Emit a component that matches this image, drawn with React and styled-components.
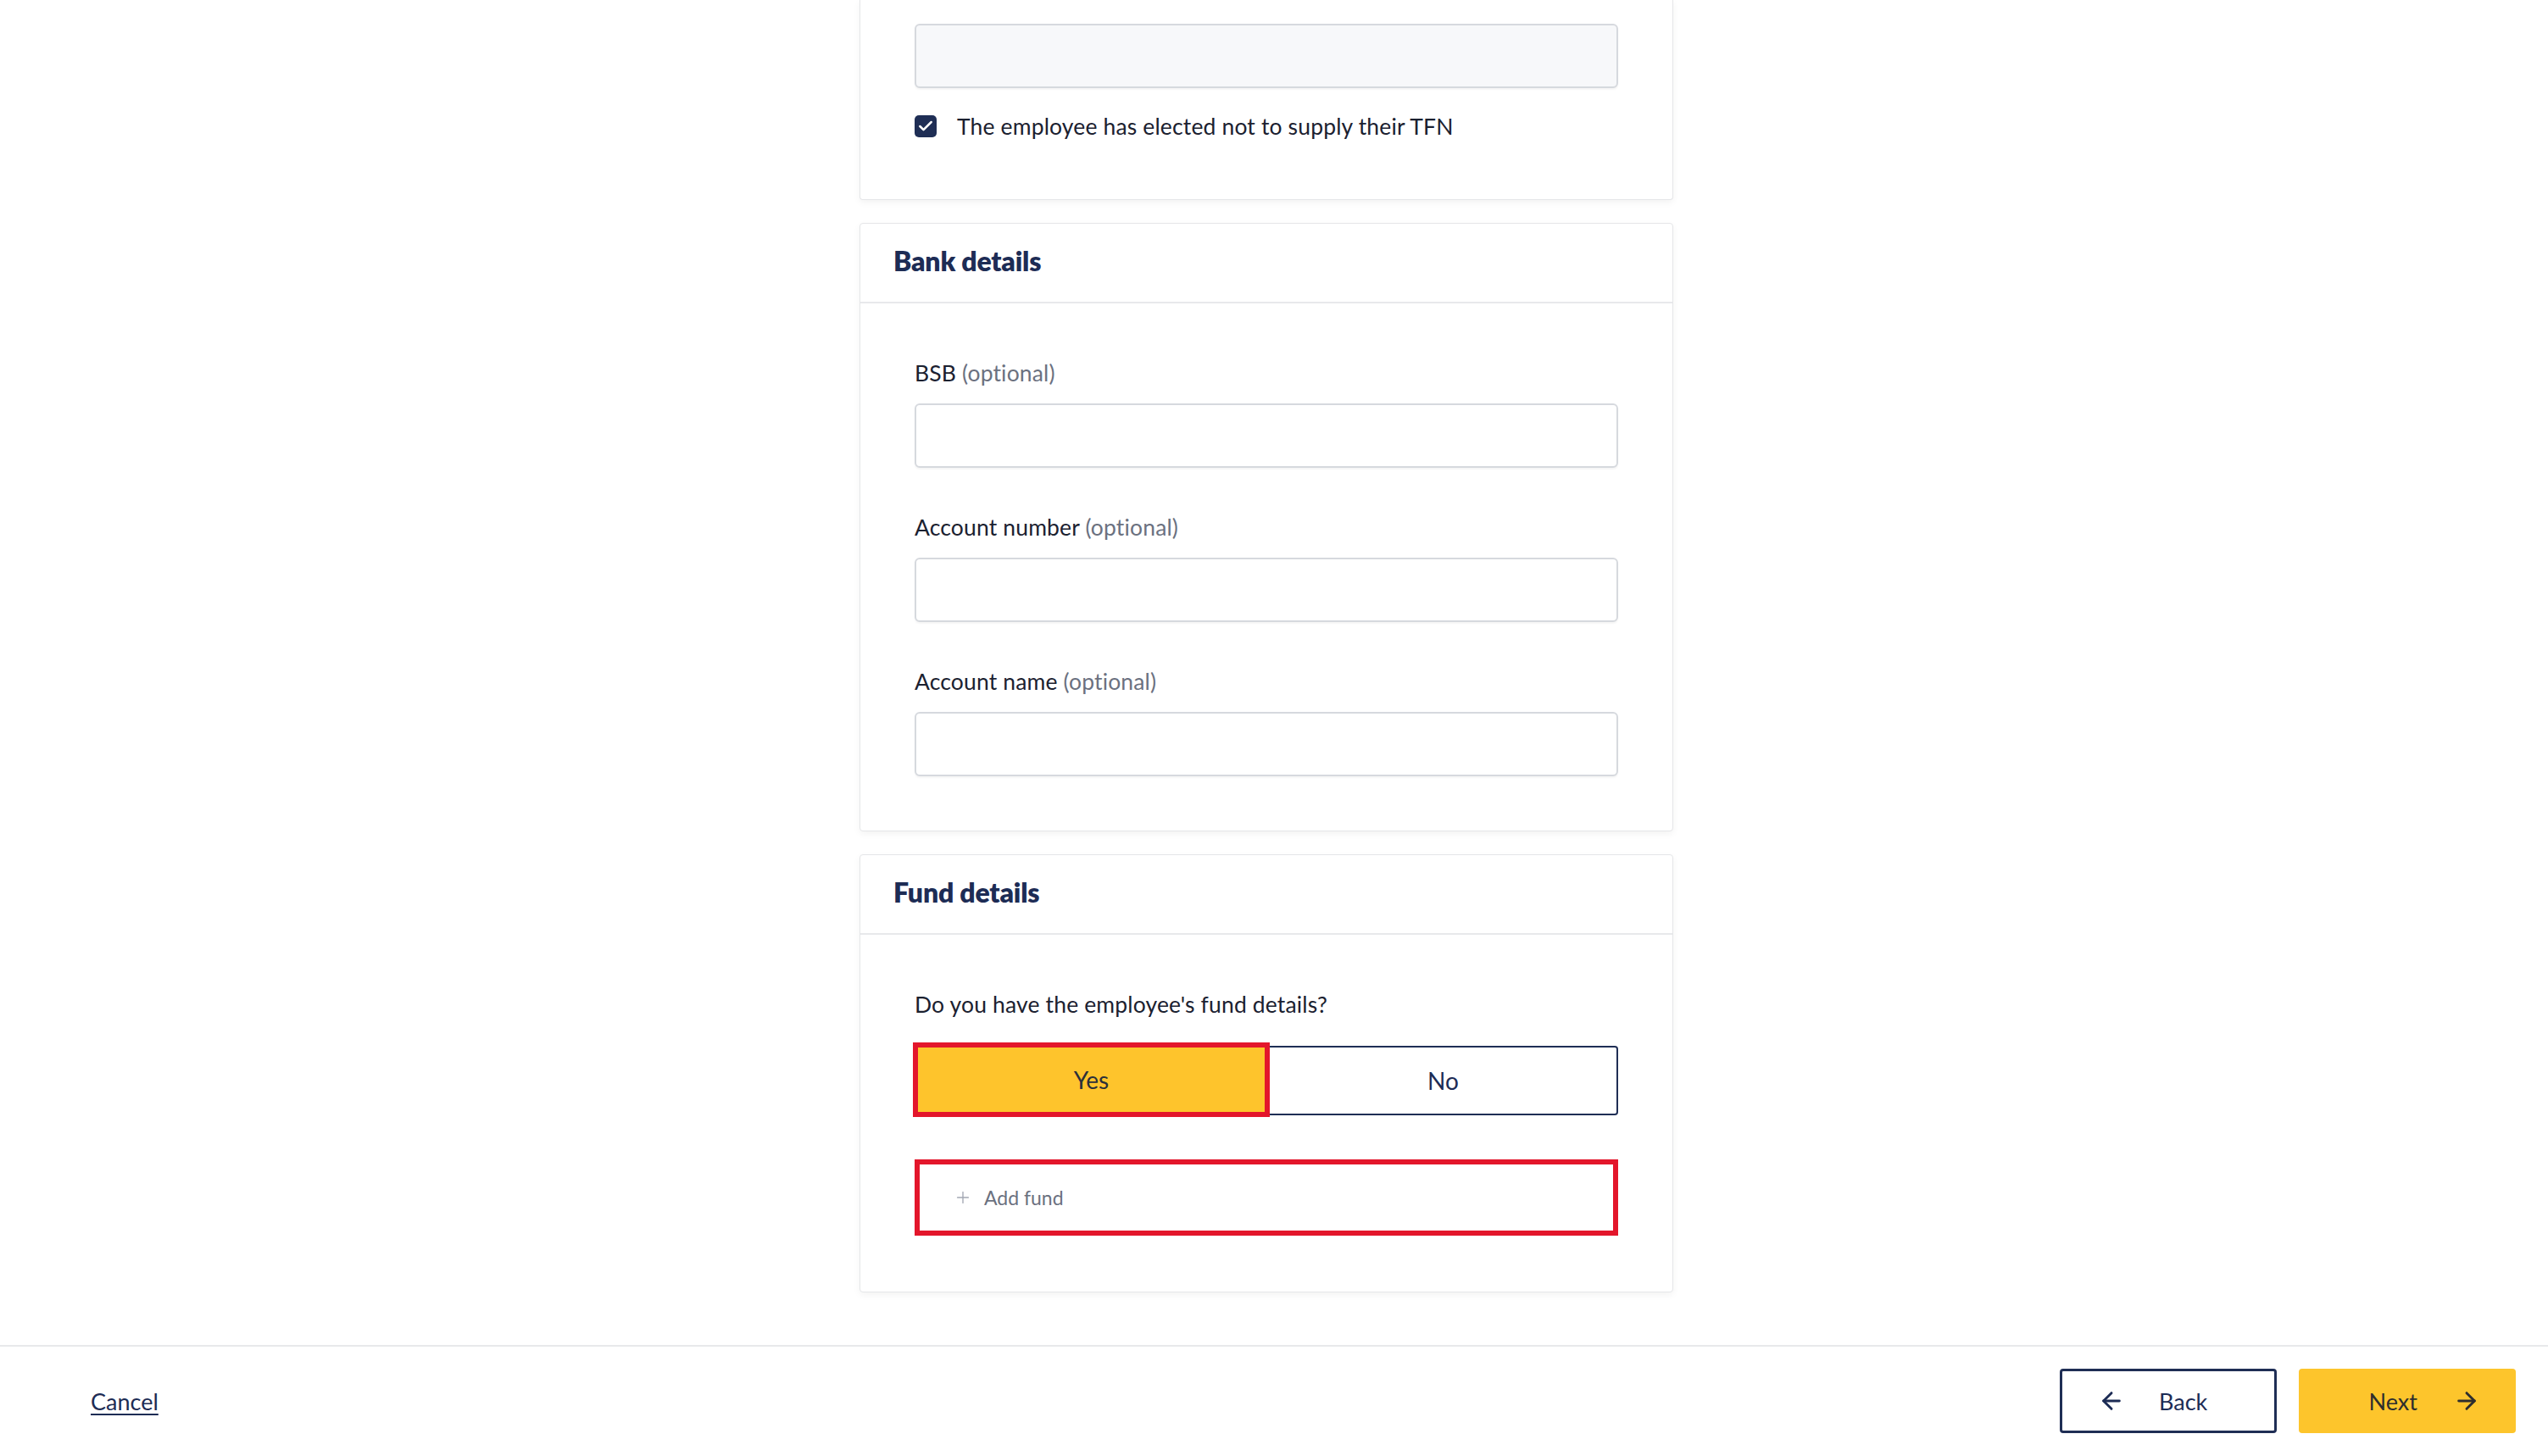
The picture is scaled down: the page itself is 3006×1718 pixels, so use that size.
import React from "react";
import styled, { createGlobalStyle } from "styled-components";
import { ArrowLeft, ArrowRight, Plus, Check } from "lucide-react";

const GlobalStyle = createGlobalStyle`
	* {
		box-sizing: border-box;
	}
	body {
		margin: 0;
		background: #fff;
		font-family: Lato, "Liberation Sans", sans-serif;
		color: #1b2130;
	}
`;

const fields = [
	{ id: "bsb", label: "BSB" },
	{ id: "account-number", label: "Account number" },
	{ id: "account-name", label: "Account name" },
];

function App() {
	return (
		<Page>
			<GlobalStyle />
			<Main>
				<Card $cut>
					<TfnBody>
						<Input disabled />
						<CheckRow>
							<CheckBox>
								<Check size={20} strokeWidth={3} color="#fff" />
							</CheckBox>
							The employee has elected not to supply their TFN
						</CheckRow>
					</TfnBody>
				</Card>

				<Card>
					<CardHeader>
						<h2>Bank details</h2>
					</CardHeader>
					<CardBody>
						{fields.map((f) => (
							<Field key={f.id}>
								<Label htmlFor={f.id}>
									{f.label} <span>(optional)</span>
								</Label>
								<Input id={f.id} />
							</Field>
						))}
					</CardBody>
				</Card>

				<Card>
					<CardHeader>
						<h2>Fund details</h2>
					</CardHeader>
					<CardBody $bottom={66}>
						<Label as="div">Do you have the employee's fund details?</Label>
						<Toggle>
							<ToggleOption $active>Yes</ToggleOption>
							<ToggleOption>No</ToggleOption>
						</Toggle>
						<AddFund>
							<Plus size={22} strokeWidth={1.5} color="#a3a8b3" />
							Add fund
						</AddFund>
					</CardBody>
				</Card>
			</Main>

			<Footer>
				<CancelLink href="#">Cancel</CancelLink>
				<FooterActions>
					<NavButton $variant="back">
						<ArrowLeft size={32} strokeWidth={2.2} />
						Back
					</NavButton>
					<NavButton $variant="next">
						Next
						<ArrowRight size={32} strokeWidth={2.2} />
					</NavButton>
				</FooterActions>
			</Footer>
		</Page>
	);
}

const Page = styled.div`
	min-height: 100vh;
	display: flex;
	flex-direction: column;
`;

const Main = styled.main`
	display: flex;
	flex-direction: column;
	align-items: center;
	gap: 27px;
	padding: 0 18px 62px 0;
`;

const Card = styled.section`
	width: 960px;
	background: #fff;
	border: 1px solid #e5e6e8;
	border-top: ${(p) => (p.$cut ? "none" : "1px solid #e5e6e8")};
	border-radius: ${(p) => (p.$cut ? "0 0 4px 4px" : "4px")};
	box-shadow: 0 3px 8px rgba(0, 0, 0, 0.05);
`;

const TfnBody = styled.div`
	padding: 28px 64px 68px;
`;

const CheckRow = styled.label`
	display: flex;
	align-items: center;
	gap: 24px;
	height: 36px;
	margin-top: 27px;
	font-size: 26.5px;
	letter-spacing: 0.15px;
	color: #1b2130;
`;

const CheckBox = styled.span`
	display: flex;
	align-items: center;
	justify-content: center;
	width: 26px;
	height: 26px;
	border-radius: 5px;
	background: #1f2e55;
`;

const CardHeader = styled.header`
	height: 94px;
	display: flex;
	align-items: center;
	padding: 0 39px 5px;
	border-bottom: 2px solid #e8e9eb;
	h2 {
		margin: 0;
		font-size: 32px;
		font-weight: 800;
		color: #1d2c55;
		letter-spacing: -0.2px;
	}
`;

const CardBody = styled.div`
	padding: 64px 64px ${(p) => p.$bottom || 64}px;
`;

const Field = styled.div`
	margin-bottom: 52px;
	&:last-child {
		margin-bottom: 0;
	}
`;

const Label = styled.label`
	display: block;
	height: 36px;
	line-height: 36px;
	margin-bottom: 18px;
	font-size: 26.5px;
	letter-spacing: 0.15px;
	color: #1b2130;
	span {
		color: #6b7180;
	}
`;

const Input = styled.input`
	display: block;
	width: 100%;
	height: 76px;
	padding: 0 20px;
	border: 2px solid #d6d9de;
	border-radius: 6px;
	background: #fff;
	box-shadow: 0 2px 2px rgba(0, 0, 0, 0.04);
	font: inherit;
	font-size: 26px;
	&:disabled {
		background: #f7f8fa;
	}
`;

const Toggle = styled.div`
	display: flex;
	height: 82px;
	margin-top: 31px;
`;

const ToggleOption = styled.button`
	flex: 1;
	font-family: inherit;
	font-size: 28px;
	cursor: pointer;
	${(p) =>
		p.$active
			? `
		background: #fec42c;
		color: #2b2f3a;
		border: 6px solid #e3162b;
		margin: -4px 0 -2px -2px;
	`
			: `
		background: #fff;
		color: #1d2c55;
		border: 2px solid #1f2e55;
		border-left: none;
		border-radius: 0 4px 4px 0;
	`}
`;

const AddFund = styled.button`
	display: flex;
	align-items: center;
	gap: 14px;
	width: 100%;
	height: 90px;
	margin-top: 52px;
	padding: 0 0 0 40px;
	background: #fff;
	border: 6px solid #e3162b;
	font-family: inherit;
	font-size: 23px;
	color: #6b7180;
	cursor: pointer;
`;

const Footer = styled.footer`
	display: flex;
	justify-content: space-between;
	align-items: center;
	padding: 26px 38px 28px 107px;
	border-top: 2px solid #e8e9eb;
`;

const CancelLink = styled.a`
	font-size: 27px;
	color: #1d2c55;
	text-decoration: underline;
	text-underline-offset: 4px;
	text-decoration-thickness: 2px;
`;

const FooterActions = styled.div`
	display: flex;
	gap: 26px;
`;

const NavButton = styled.button`
	display: flex;
	align-items: center;
	width: 256px;
	height: 76px;
	border-radius: 4px;
	font-family: inherit;
	font-size: 27px;
	cursor: pointer;
	${(p) =>
		p.$variant === "back"
			? `
		gap: 40px;
		padding: 0 0 0 42px;
		background: #fff;
		color: #1d2c55;
		border: 3px solid #1f2e55;
	`
			: `
		justify-content: flex-end;
		gap: 42px;
		padding: 0 42px 0 0;
		background: #fdc52c;
		color: #2e2e2e;
		border: none;
	`}
`;

export default App;
